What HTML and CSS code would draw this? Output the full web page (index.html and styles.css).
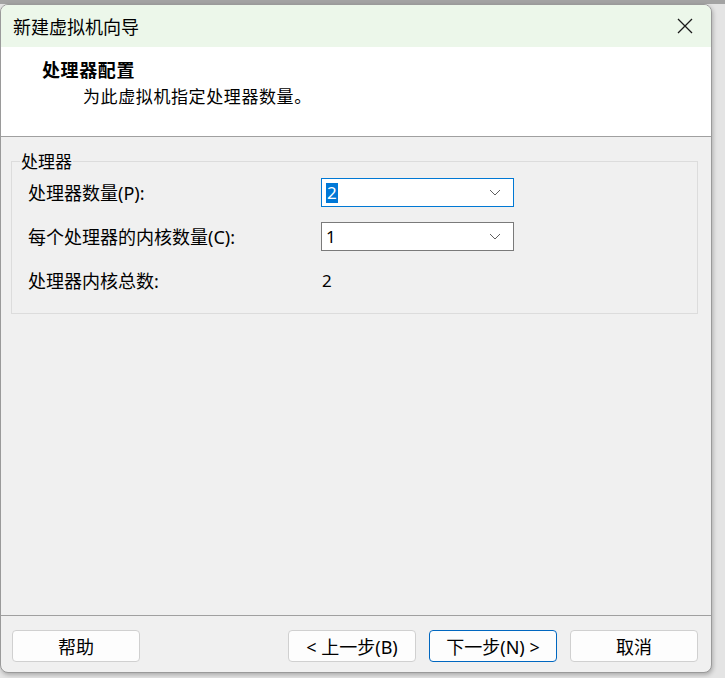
FILE: index.html
```html
<!DOCTYPE html>
<html lang="zh-CN">
<head>
<meta charset="utf-8">
<link rel="stylesheet" href="styles.css">
</head>
<body>
<div class="window">
  <div class="titlebar">
    <span class="title">新建虚拟机向导</span>
    <span class="close">
      <svg width="16" height="16" viewBox="0 0 16 16"><path d="M1 1 L15 15 M15 1 L1 15" stroke="#1a1a1a" stroke-width="1.3" fill="none"/></svg>
    </span>
  </div>
  <div class="header">
    <div class="h-title">处理器配置</div>
    <div class="h-sub">为此虚拟机指定处理器数量。</div>
  </div>
  <div class="content">
    <fieldset class="group">
      <legend>处理器</legend>
      <div class="grid">
        <div class="label">处理器数量(P):</div>
        <div class="combo focus"><span class="sel">2</span><svg class="chev" width="12" height="7" viewBox="0 0 12 7"><path d="M1 1 L6 6 L11 1" stroke="#606060" stroke-width="1" fill="none"/></svg></div>
        <div class="label">每个处理器的内核数量(C):</div>
        <div class="combo"><span>1</span><svg class="chev" width="12" height="7" viewBox="0 0 12 7"><path d="M1 1 L6 6 L11 1" stroke="#606060" stroke-width="1" fill="none"/></svg></div>
        <div class="label">处理器内核总数:</div>
        <div class="value">2</div>
      </div>
    </fieldset>
  </div>
  <div class="footer">
    <button class="btn">帮助</button>
    <div class="spacer"></div>
    <button class="btn">&lt; 上一步(B)</button>
    <button class="btn primary">下一步(N) &gt;</button>
    <button class="btn">取消</button>
  </div>
</div>
</body>
</html>
```
FILE: styles.css
```css
html, body {
  margin: 0;
  padding: 0;
  height: 100%;
}
body {
  background: linear-gradient(to bottom, #a3a3a3 0, #a3a3a3 4px, #e4e4e4 4px);
  font-family: "Noto Sans", "Noto Sans CJK SC", sans-serif;
  color: #000;
  padding-top: 4px;
  box-sizing: border-box;
}
.window {
  width: 712px;
  height: 669px;
  box-sizing: border-box;
  border: 1px solid #9a9a9a;
  border-radius: 8px;
  overflow: hidden;
  background: #f0f0f0;
  display: flex;
  flex-direction: column;
  box-shadow: 1px 2px 4px rgba(0,0,0,0.25);
}
.titlebar {
  height: 42px;
  background: #ecf7ea;
  display: flex;
  align-items: center;
  justify-content: space-between;
  padding: 0 16px 0 12px;
  flex: none;
}
.title {
  font-size: 18px;
  font-family: "Noto Sans CJK SC", sans-serif;
}
.close {
  display: flex;
  width: 16px;
  height: 16px;
  margin-right: 2px;
}
.header {
  background: #fff;
  height: 90px;
  box-sizing: border-box;
  border-bottom: 1px solid #a0a0a0;
  padding: 10px 0 0 41px;
  flex: none;
}
.h-title {
  font-family: "Noto Sans CJK SC", sans-serif;
  font-weight: bold;
  font-size: 18px;
  letter-spacing: 0.6px;
  line-height: 24px;
}
.h-sub {
  font-family: "Noto Sans CJK SC", sans-serif;
  font-size: 17px;
  letter-spacing: 0.6px;
  line-height: 24px;
  margin-top: 3px;
  padding-left: 41px;
}
.content {
  flex: 1;
  padding: 14px 13px 0 10px;
}
.group {
  margin: 0;
  border: 1px solid #dcdcdc;
  padding: 7px 16px 12px 16px;
  height: 163px;
  box-sizing: border-box;
}
.group legend {
  font-family: "Noto Sans CJK SC", sans-serif;
  font-size: 17px;
  padding: 0 1px;
  margin-left: -8px;
  line-height: 20px;
}
.grid {
  display: grid;
  grid-template-columns: 293px 193px;
  grid-auto-rows: 29px;
  row-gap: 15px;
  align-items: center;
}
.label {
  font-size: 18px;
  line-height: 22px;
}
.combo {
  height: 29px;
  box-sizing: border-box;
  border: 1px solid #7a7a7a;
  background: #fff;
  display: flex;
  align-items: center;
  justify-content: space-between;
  padding: 0 12px 0 4px;
  font-size: 17px;
}
.combo.focus {
  border-color: #0078d4;
}
.sel {
  background: #0078d7;
  color: #fff;
  line-height: 20px;
  padding: 0 1px;
}
.chev {
  display: block;
}
.value {
  font-size: 17px;
  padding-left: 1px;
}
.footer {
  flex: none;
  height: 57px;
  box-sizing: border-box;
  border-top: 1px solid #a0a0a0;
  display: flex;
  align-items: flex-start;
  padding: 14px 13px 0 11px;
  gap: 13px;
}
.spacer {
  flex: 1;
}
.btn {
  width: 128px;
  height: 32px;
  box-sizing: border-box;
  border: 1px solid #d0d0d0;
  border-radius: 4px;
  background: #fdfdfd;
  font-family: "Noto Sans", "Noto Sans CJK SC", sans-serif;
  font-size: 18px;
  color: #000;
  padding: 0;
}
.btn.primary {
  border-color: #0067c0;
}
```
